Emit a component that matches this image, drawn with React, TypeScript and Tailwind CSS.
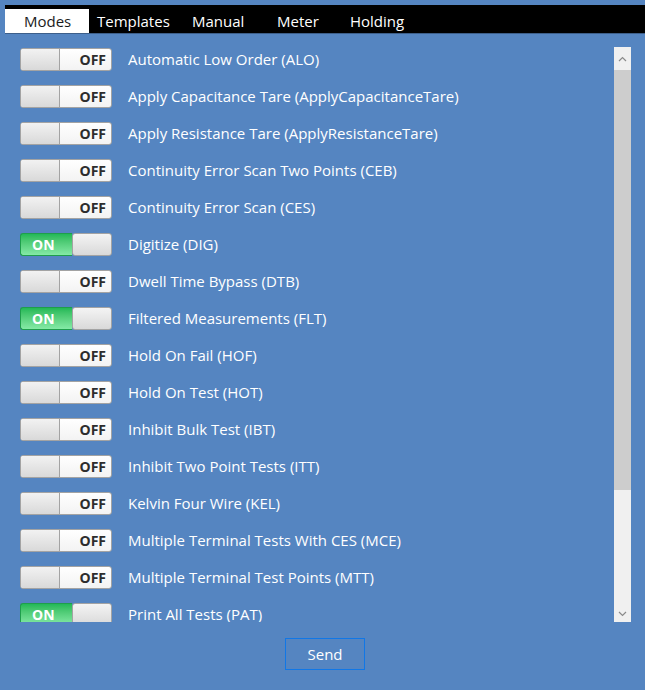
const modes: { label: string; on: boolean }[] = [
  { label: "Automatic Low Order (ALO)", on: false },
  { label: "Apply Capacitance Tare (ApplyCapacitanceTare)", on: false },
  { label: "Apply Resistance Tare (ApplyResistanceTare)", on: false },
  { label: "Continuity Error Scan Two Points (CEB)", on: false },
  { label: "Continuity Error Scan (CES)", on: false },
  { label: "Digitize (DIG)", on: true },
  { label: "Dwell Time Bypass (DTB)", on: false },
  { label: "Filtered Measurements (FLT)", on: true },
  { label: "Hold On Fail (HOF)", on: false },
  { label: "Hold On Test (HOT)", on: false },
  { label: "Inhibit Bulk Test (IBT)", on: false },
  { label: "Inhibit Two Point Tests (ITT)", on: false },
  { label: "Kelvin Four Wire (KEL)", on: false },
  { label: "Multiple Terminal Tests With CES (MCE)", on: false },
  { label: "Multiple Terminal Test Points (MTT)", on: false },
  { label: "Print All Tests (PAT)", on: true },
];

function Toggle({ on }: { on: boolean }) {
  const knob = (
    <div className="w-[40px] h-full bg-gradient-to-b from-[#f4f4f4] to-[#d9d9d9] border border-[#a3a3a3] rounded-[3px]" />
  );
  if (on) {
    return (
      <div className="flex w-[92px] h-[23px] shrink-0">
        <div className="flex items-center w-[52px] h-full pl-[11px] rounded-l-[3px] border border-r-0 border-[#1f9e4c] bg-gradient-to-b from-[#21b957] to-[#84eaa6] text-white text-[14px] font-bold">
          ON
        </div>
        {knob}
      </div>
    );
  }
  return (
    <div className="flex w-[92px] h-[23px] shrink-0 rounded-[3px] border border-[#a3a3a3] bg-gradient-to-b from-white to-[#f3f3f3] overflow-hidden">
      <div className="w-[39px] h-full bg-gradient-to-b from-[#f2f2f2] to-[#d9d9d9] border-r border-[#a3a3a3]" />
      <div className="flex-1 flex items-center justify-end pr-[5px] text-[#2d2d2d] text-[14px] font-bold">
        OFF
      </div>
    </div>
  );
}

function Chevron({ up }: { up?: boolean }) {
  return (
    <svg width="9" height="6" viewBox="0 0 9 6" className="text-[#8a8a8a]">
      <path
        d={up ? "M1 5 L4.5 1.5 L8 5" : "M1 1 L4.5 4.5 L8 1"}
        fill="none"
        stroke="currentColor"
        strokeWidth="1.2"
      />
    </svg>
  );
}

export default function App() {
  return (
    <div
      className="w-[645px] h-[690px] bg-[#5585c1] pt-[5px] overflow-hidden"
      style={{ fontFamily: '"Open Sans", "Noto Sans", sans-serif' }}
    >
      {/* tab strip */}
      <div className="ml-[5px] h-[29px] bg-black flex items-end text-[15px] border-b border-[#3d5f8a]">
        <div className="w-[84px] h-[24px] bg-white text-[#1b1b1b] pl-[19px] flex items-center">Modes</div>
        <div className="w-[95px] h-[24px] text-white pl-[8px] flex items-center">Templates</div>
        <div className="w-[86px] h-[24px] text-white pl-[8px] flex items-center">Manual</div>
        <div className="w-[73px] h-[24px] text-white pl-[7px] flex items-center">Meter</div>
        <div className="h-[24px] text-white pl-[7px] flex items-center">Holding</div>
      </div>

      {/* mode list with scrollbar */}
      <div className="flex mt-[13px] h-[575px]">
        <div className="flex-1 overflow-hidden pl-[20px] pt-[1px]">
          <div className="flex flex-col gap-[14px]">
            {modes.map((m) => (
              <div key={m.label} className="flex items-center h-[23px]">
                <Toggle on={m.on} />
                <span className="ml-[16px] text-white text-[15px] whitespace-nowrap">{m.label}</span>
              </div>
            ))}
          </div>
        </div>
        <div className="w-[17px] mr-[14px] flex flex-col bg-[#f0f0f0]">
          <div className="h-[23px] flex items-center justify-center">
            <Chevron up />
          </div>
          <div className="h-[420px] bg-[#cdcdcd]" />
          <div className="flex-1" />
          <div className="h-[17px] flex items-center justify-center">
            <Chevron />
          </div>
        </div>
      </div>

      <div className="flex justify-center mt-[16px]">
        <button className="w-[80px] h-[32px] border border-[#1177e6] text-white text-[15px] ml-[5px]">Send</button>
      </div>
    </div>
  );
}
